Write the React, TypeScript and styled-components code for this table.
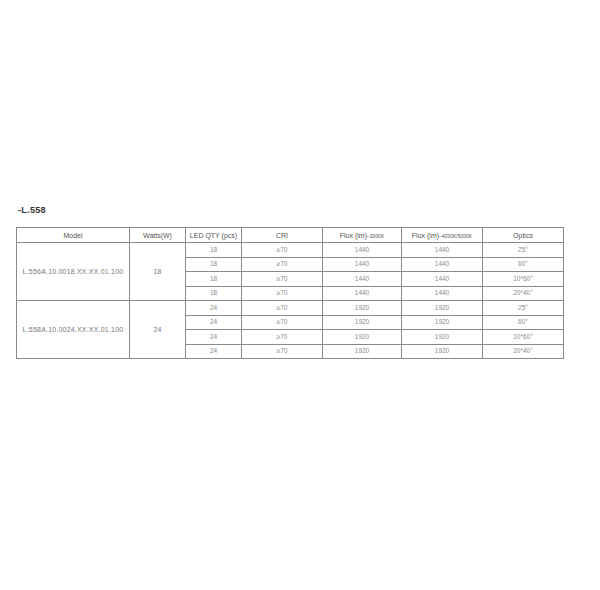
import styled, { createGlobalStyle } from "styled-components";

const GlobalStyle = createGlobalStyle`
  html, body {
    margin: 0;
    padding: 0;
    background: #fff;
  }
`;

const Page = styled.div`
  width: 600px;
  height: 590px;
  box-sizing: border-box;
  padding: 204px 0 0 16px;
  font-family: "Liberation Sans", Arial, sans-serif;
`;

const Title = styled.div`
  font-size: 9px;
  font-weight: bold;
  color: #333;
  letter-spacing: 0.3px;
  height: 12px;
  line-height: 12px;
  padding-left: 2px;
  margin-bottom: 11px;
`;

const Table = styled.table`
  border-collapse: collapse;
  table-layout: fixed;
  width: 540px;
`;

const Th = styled.th<{ $w: number }>`
  width: ${(p) => p.$w}px;
  height: 14px;
  padding: 0;
  border: 1px solid #8a8a8a;
  font-size: 7px;
  font-weight: normal;
  color: #555;
  text-align: center;
  vertical-align: middle;
  white-space: nowrap;
`;

const Small = styled.span`
  font-size: 5px;
`;

const Td = styled.td<{ $dim?: boolean }>`
  height: 13.5px;
  padding: 0;
  border: 1px solid #8a8a8a;
  font-size: ${(p) => (p.$dim ? "6.5px" : "7px")};
  letter-spacing: ${(p) => (p.$dim ? "0" : "0.2px")};
  color: ${(p) => (p.$dim ? "#8c8c8c" : "#777")};
  text-align: center;
  vertical-align: middle;
  white-space: nowrap;
  line-height: 1;
`;

const groups = [
  { model: "L.556A.10.0018.XX.XX.01.100", watts: "18", qty: "18", flux: "1440" },
  { model: "L.558A.10.0024.XX.XX.01.100", watts: "24", qty: "24", flux: "1920" },
];

const optics = ["25°", "60°", "10*60°", "20*40°"];

const App = () => {
  return (
    <Page>
      <GlobalStyle />
      <Title>-L.558</Title>
      <Table>
        <thead>
          <tr>
            <Th $w={112}>Model</Th>
            <Th $w={55}>Watts(W)</Th>
            <Th $w={55}>LED QTY (pcs)</Th>
            <Th $w={80}>CRI</Th>
            <Th $w={78}>
              Flux (lm)<Small>–3000K</Small>
            </Th>
            <Th $w={80}>
              Flux (lm)<Small>–4000K/5000K</Small>
            </Th>
            <Th $w={80}>Optics</Th>
          </tr>
        </thead>
        <tbody>
          {groups.map((g) =>
            optics.map((o, i) => (
              <tr key={g.model + o}>
                {i === 0 && (
                  <>
                    <Td rowSpan={4}>{g.model}</Td>
                    <Td rowSpan={4}>{g.watts}</Td>
                  </>
                )}
                <Td $dim>{g.qty}</Td>
                <Td $dim>≥70</Td>
                <Td $dim>{g.flux}</Td>
                <Td $dim>{g.flux}</Td>
                <Td $dim>{o}</Td>
              </tr>
            ))
          )}
        </tbody>
      </Table>
    </Page>
  );
};

export default App;
